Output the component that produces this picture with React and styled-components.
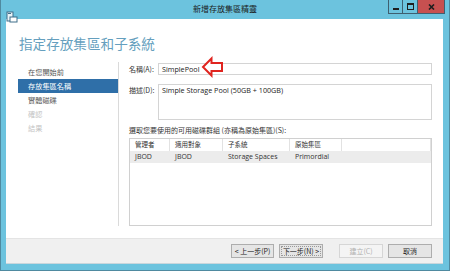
import React from "react";
import styled, { createGlobalStyle } from "styled-components";

const GlobalStyle = createGlobalStyle`
  html, body {
    margin: 0;
    padding: 0;
    overflow: hidden;
  }
  body {
    font-family: "Noto Sans CJK TC", "Noto Sans", sans-serif;
  }
`;

const Frame = styled.div`
  width: 450px;
  height: 271px;
  box-sizing: border-box;
  background: #6cc3de;
  border: 1px solid #4f8aa0;
  border-top: none;
  display: flex;
  flex-direction: column;
`;

const TitleBar = styled.div`
  height: 19px;
  display: flex;
  align-items: flex-start;
  position: relative;
`;

const AppIcon = styled.div`
  width: 12px;
  height: 12px;
  margin: 4px 0 0 5px;
`;

const Title = styled.div`
  position: absolute;
  left: 0;
  right: 0;
  top: 3px;
  text-align: center;
  font-size: 8px;
  color: #1a1a1a;
  pointer-events: none;
`;

const Controls = styled.div`
  margin-left: auto;
  margin-right: 4px;
  display: flex;
  height: 14px;
`;

const CtrlButton = styled.div`
  width: ${(p) => (p.close ? "27px" : "15px")};
  height: 14px;
  box-sizing: border-box;
  background: ${(p) => (p.close ? "#c75050" : "#6cc3de")};
  border: 1px solid #3e5f70;
  border-top: none;
  border-left: ${(p) => (p.first ? "1px solid #3e5f70" : "none")};
  display: flex;
  align-items: center;
  justify-content: center;
`;

const MinGlyph = styled.div`
  width: 6px;
  height: 2px;
  background: #1e1e1e;
  margin-top: 4px;
`;

const MaxGlyph = styled.div`
  width: 5px;
  height: 4px;
  border: 1px solid #1e1e1e;
  border-top-width: 2px;
`;

const Client = styled.div`
  flex: 1;
  margin: 0 6px 6px 5px;
  background: #fff;
  display: flex;
  flex-direction: column;
  border-bottom: 1px solid #c9d6dc;
`;

const Header = styled.div`
  height: 43px;
  box-sizing: border-box;
  padding: 14px 0 0 13px;
`;

const Heading = styled.h1`
  margin: 0;
  font-size: 13.6px;
  font-weight: 400;
  color: #659fbe;
  line-height: 20px;
`;

const Body = styled.div`
  flex: 1;
  display: flex;
  padding-bottom: 12px;
`;

const Sidebar = styled.div`
  width: 100px;
  margin-left: 12px;
  padding-top: 3px;
  border-right: 1px solid #dadada;
`;

const Step = styled.div`
  height: 14px;
  line-height: 14px;
  padding-left: 10px;
  font-size: 7.2px;
  color: ${(p) => (p.active ? "#ffffff" : p.disabled ? "#c4c4c4" : "#555555")};
  background: ${(p) => (p.active ? "#2f6fa8" : "transparent")};
`;

const Content = styled.div`
  flex: 1;
  padding: 1px 11px 0 10px;
  display: flex;
  flex-direction: column;
`;

const FieldRow = styled.div`
  display: flex;
  align-items: flex-start;
  margin-bottom: ${(p) => p.gap || 0}px;
  position: relative;
`;

const Label = styled.div`
  width: 29px;
  font-size: 7px;
  color: #333;
  line-height: 12px;
  white-space: nowrap;
`;

const TextBox = styled.div`
  flex: 1;
  height: ${(p) => p.h}px;
  box-sizing: border-box;
  border: 1px solid #d4d4d4;
  font-size: 7.2px;
  font-family: "Open Sans", "Noto Sans", sans-serif;
  color: #222;
  padding: 0 3px;
  line-height: 11px;
`;

const Arrow = styled.svg`
  position: absolute;
  left: 72px;
  top: -7px;
`;

const ListLabel = styled.div`
  font-size: 7px;
  color: #333;
  margin: 5px 0 3px;
  line-height: 10px;
`;

const Table = styled.div`
  flex: 1;
  border: 1px solid #d0d0d0;
  box-sizing: border-box;
`;

const Row = styled.div`
  display: grid;
  grid-template-columns: 40px 53px 67px 52px 1fr;
  height: 12px;
  background: ${(p) => (p.selected ? "#ececec" : "transparent")};
`;

const Cell = styled.div`
  font-size: ${(p) => (p.head ? "6.5px" : "7px")};
  font-family: "Open Sans", "Noto Sans", "Noto Sans CJK TC", sans-serif;
  color: #333;
  line-height: 12px;
  padding-left: 5px;
  border-right: ${(p) => (p.head ? "1px solid #e2e2e2" : "none")};
  white-space: nowrap;
  overflow: hidden;
`;

const Footer = styled.div`
  height: 24px;
  background: #f0f0f0;
  border-top: 1px solid #e4e4e4;
  display: flex;
  align-items: center;
  justify-content: flex-end;
  padding-right: 11px;
`;

const Button = styled.div`
  width: ${(p) => p.w}px;
  height: 14px;
  box-sizing: border-box;
  border: 1px solid ${(p) => (p.disabled ? "#d6d6d6" : "#adadad")};
  outline: ${(p) => (p.focused ? "1px dotted #9a9a9a" : "none")};
  outline-offset: -3px;
  background: ${(p) => (p.disabled ? "#f4f4f4" : "#e5e5e5")};
  color: ${(p) => (p.disabled ? "#b0b0b0" : "#222")};
  font-size: 7px;
  display: flex;
  align-items: center;
  justify-content: center;
  margin-left: ${(p) => p.ml}px;
  white-space: nowrap;
`;

const columns = ["管理者", "適用對象", "子系統", "原始集區", ""];
const pool = ["JBOD", "JBOD", "Storage Spaces", "Primordial", ""];

export default function App() {
  return (
    <>
      <GlobalStyle />
      <Frame>
        <TitleBar>
          <AppIcon>
            <svg width="12" height="12" viewBox="0 0 12 12">
              <rect x="1" y="1" width="6" height="9" fill="#e9f3f8" stroke="#3f6f8a" strokeWidth="1" />
              <rect x="4" y="6" width="7" height="5" fill="#ffffff" stroke="#3f6f8a" strokeWidth="1" />
              <rect x="2" y="2" width="3" height="1" fill="#3f6f8a" />
            </svg>
          </AppIcon>
          <Title>新增存放集區精靈</Title>
          <Controls>
            <CtrlButton first>
              <MinGlyph />
            </CtrlButton>
            <CtrlButton>
              <MaxGlyph />
            </CtrlButton>
            <CtrlButton close>
              <svg width="7" height="6" viewBox="0 0 7 6">
                <path d="M1 0.5 L6 5.5 M6 0.5 L1 5.5" stroke="#1e1e1e" strokeWidth="1.6" />
              </svg>
            </CtrlButton>
          </Controls>
        </TitleBar>
        <Client>
          <Header>
            <Heading>指定存放集區和子系統</Heading>
          </Header>
          <Body>
            <Sidebar>
              <Step>在您開始前</Step>
              <Step active>存放集區名稱</Step>
              <Step>實體磁碟</Step>
              <Step disabled>確認</Step>
              <Step disabled>結果</Step>
            </Sidebar>
            <Content>
              <FieldRow gap={9}>
                <Label>名稱(A):</Label>
                <TextBox h={12}>SimplePool</TextBox>
                <Arrow width="23" height="22" viewBox="0 0 23 22">
                  <path
                    d="M2 11 L10.5 2.5 L10.5 7 L21 7 L21 15 L10.5 15 L10.5 19.5 Z"
                    fill="#ffffff"
                    stroke="#e0241f"
                    strokeWidth="2"
                    strokeLinejoin="miter"
                  />
                </Arrow>
              </FieldRow>
              <FieldRow>
                <Label>描述(D):</Label>
                <TextBox h={36}>Simple Storage Pool (50GB + 100GB)</TextBox>
              </FieldRow>
              <ListLabel>選取您要使用的可用磁碟群組 (亦稱為原始集區)(S):</ListLabel>
              <Table>
                <Row>
                  {columns.map((c, i) => (
                    <Cell head key={i}>
                      {c}
                    </Cell>
                  ))}
                </Row>
                <Row selected>
                  {pool.map((c, i) => (
                    <Cell key={i}>{c}</Cell>
                  ))}
                </Row>
              </Table>
            </Content>
          </Body>
          <Footer>
            <Button w={43}>&lt; 上一步(P)</Button>
            <Button w={44} ml={5} focused>
              下一步(N) &gt;
            </Button>
            <Button w={44} ml={16} disabled>
              建立(C)
            </Button>
            <Button w={44} ml={5}>
              取消
            </Button>
          </Footer>
        </Client>
      </Frame>
    </>
  );
}
